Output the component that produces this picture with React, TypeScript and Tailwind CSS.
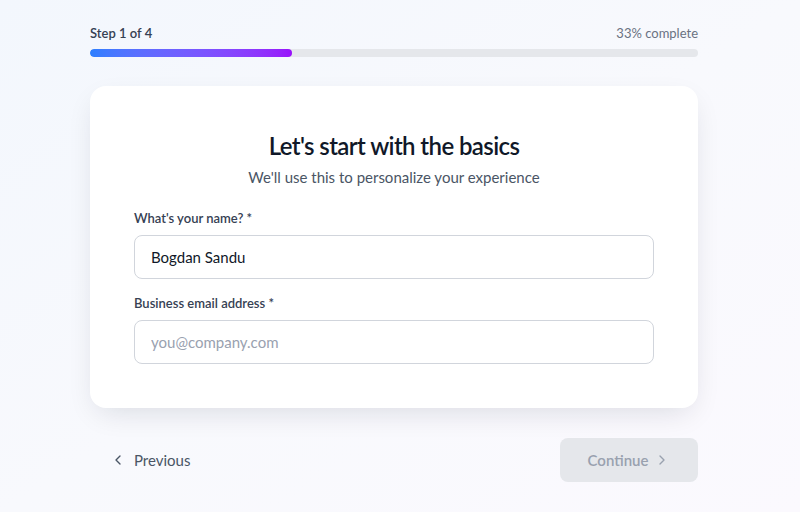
import { ChevronLeft, ChevronRight } from "lucide-react"

export default function App() {
  return (
    <div
      className="min-h-[512px] w-full bg-gradient-to-br from-[#f3f7fd] via-[#f8f9fd] to-[#fbf9fe] pr-3 text-gray-900"
      style={{ fontFamily: 'Lato, "Noto Sans", sans-serif' }}
    >
      <div className="mx-auto w-[608px] pt-[23px]">
        {/* Progress */}
        <div className="mb-1.5 flex items-center justify-between text-[13px] leading-5">
          <span className="font-semibold text-gray-700">Step 1 of 4</span>
          <span className="text-gray-500">33% complete</span>
        </div>
        <div className="mb-[29px] h-2 w-full overflow-hidden rounded-full bg-gray-200">
          <div className="h-full rounded-full bg-gradient-to-r from-blue-500 to-purple-600" style={{ width: "33.3%" }} />
        </div>

        {/* Card */}
        <div className="rounded-2xl bg-white p-11 shadow-[0_10px_30px_-8px_rgba(15,23,42,0.14)]">
          <div className="mb-[19px] text-center">
            <h1 className="mb-[3px] text-2xl leading-8 font-semibold tracking-tight text-gray-900">Let's start with the basics</h1>
            <p className="text-[15px] leading-6 text-gray-600">We'll use this to personalize your experience</p>
          </div>

          <div className="flex flex-col gap-[14px]">
            <div>
              <label className="mb-[7px] block text-[13px] leading-5 font-semibold text-gray-700">What's your name? *</label>
              <input
                className="h-11 w-full rounded-lg border border-gray-300 px-4 text-[15px] text-gray-900 outline-none"
                defaultValue="Bogdan Sandu"
              />
            </div>
            <div>
              <label className="mb-[7px] block text-[13px] leading-5 font-semibold text-gray-700">Business email address *</label>
              <input
                className="h-11 w-full rounded-lg border border-gray-300 px-4 text-[15px] text-gray-900 outline-none placeholder:text-gray-400"
                placeholder="you@company.com"
              />
            </div>
          </div>
        </div>

        {/* Navigation */}
        <div className="mt-[30px] flex items-center justify-between">
          <button className="flex h-11 items-center gap-2 rounded-lg px-5 text-[15px] text-gray-600">
            <ChevronLeft className="h-4 w-4" strokeWidth={2} />
            Previous
          </button>
          <button className="flex h-11 w-[138px] items-center justify-center gap-1.5 rounded-lg bg-gray-200 text-[15px] font-semibold text-gray-400">
            Continue
            <ChevronRight className="h-4 w-4" strokeWidth={2} />
          </button>
        </div>
      </div>
    </div>
  )
}
